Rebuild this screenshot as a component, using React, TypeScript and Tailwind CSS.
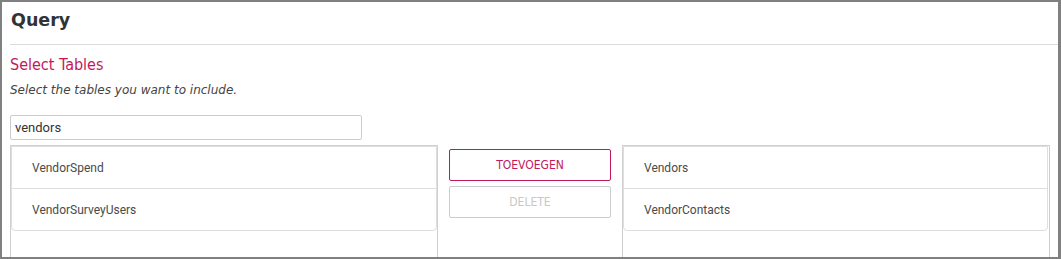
const condensed = { fontFamily: '"DejaVu Sans Condensed", "DejaVu Sans", sans-serif' };

const available = ['VendorSpend', 'VendorSurveyUsers'];
const selected = ['Vendors', 'VendorContacts'];

function TableList({ items, inset }: { items: string[]; inset?: boolean }) {
  return (
    <div className="h-[140px] border border-[#d0d0d0] bg-white">
      <ul className={'border border-[#dedede] rounded-b-[4px] ' + (inset ? 'mr-px' : '')}>
        {items.map((name, i) => (
          <li
            key={name}
            className={
              'flex items-center pl-[20px] text-[12px] text-[#4a4a4a] font-["Roboto",sans-serif] ' +
              (i < items.length - 1 ? 'h-[42px] border-b border-[#dedede]' : 'h-[41px]')
            }
          >
            {name}
          </li>
        ))}
      </ul>
    </div>
  );
}

export default function App() {
  return (
    <div className="w-[1061px] h-[259px] overflow-hidden bg-white border-2 border-r-[3px] border-[#808080]">
      {/* Header */}
      <div className="ml-[8px] h-[43px] border-b border-[#dcdcdc] pt-[7px]">
        <h1 className="text-[17.5px] leading-[22px] font-bold text-[#333] pl-px font-['DejaVu_Sans',sans-serif]">
          Query
        </h1>
      </div>

      <div className="pl-[8px] pr-[8px]">
        <h2 className="mt-[10px] text-[16px] leading-[20px] text-[#c2185b]" style={condensed}>
          Select Tables
        </h2>
        <p className="mt-[7px] text-[12px] leading-[16px] italic text-[#444] font-['DejaVu_Sans',sans-serif]">
          Select the tables you want to include.
        </p>

        <input
          readOnly
          value="vendors"
          className="mt-[17px] block w-[352px] h-[25px] border border-[#cccccc] rounded-[2px] pl-[4px] text-[13px] text-[#333] font-['Roboto',sans-serif] outline-none"
        />

        {/* Lists */}
        <div className="mt-[5px] grid grid-cols-[428px_184px_428px]">
          <TableList items={available} />

          <div className="flex flex-col gap-[5px] px-[11px] pt-[4px]">
            <button
              className="h-[32px] border border-[#c2185b] rounded-[2px] text-[12px] text-[#c2185b] bg-white"
              style={condensed}
            >
              TOEVOEGEN
            </button>
            <button
              className="h-[32px] border border-[#cccccc] rounded-[2px] text-[12px] text-[#c8c8c8] bg-white"
              style={condensed}
            >
              DELETE
            </button>
          </div>

          <TableList items={selected} inset />
        </div>
      </div>
    </div>
  );
}
